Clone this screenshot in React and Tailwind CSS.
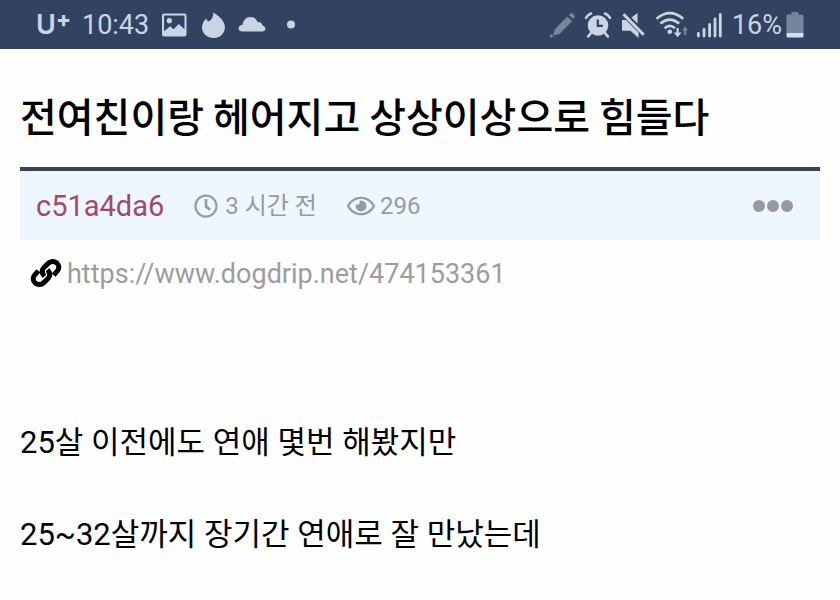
import React from 'react'
import { FaRegClock, FaRegEye } from 'react-icons/fa'

const post = {
  title: '전여친이랑 헤어지고 상상이상으로 힘들다',
  author: 'c51a4da6',
  time: '3 시간 전',
  views: 296,
  url: 'https://www.dogdrip.net/474153361',
  body: ['25살 이전에도 연애 몇번 해봤지만', '25~32살까지 장기간 연애로 잘 만났는데']
}

function StatusIcon({ children, className = '' }) {
  return (
    <svg
      viewBox="0 0 28 28"
      fill="currentColor"
      aria-hidden="true"
      className={`size-7 shrink-0 ${className}`}
    >
      {children}
    </svg>
  )
}

function StatusBar() {
  return (
    <div className="flex h-[49px] items-center justify-between bg-[#314361] px-9 text-[27px] leading-8 text-[#c9d5e4]">
      <div className="flex items-center gap-[11px]">
        <div className="flex items-start">
          <span className="font-[Inter] text-[27px] font-semibold">U</span>
          <span className="font-[Inter] text-[22px] leading-5 font-extrabold">+</span>
        </div>
        <span>10:43</span>
        <StatusIcon>
          <path
            fillRule="evenodd"
            d="M4 2.500h20.500a2 2 0 0 1 2 2v19a2 2 0 0 1-2 2H4a2 2 0 0 1-2-2v-19a2 2 0 0 1 2-2zM4.100 4.400v15.800l6-5 3.400 3 5.300-5.200 5.700 5.200V4.400z"
          />
          <circle cx="9.300" cy="9.700" r="2.600" />
        </StatusIcon>
        <StatusIcon>
          <path d="M14.300 1.400c4.600 2.800 11.600 8 11.600 14.500 0 6.300-4.700 11-11.200 11S3 22.500 3 16.400c0-4 2-6.900 4.200-9 .5 1.300 1.100 2.400 2.400 3.100 3.300-1.700 4.700-4.900 4.700-9.100z" />
        </StatusIcon>
        <StatusIcon>
          <path d="M4.500 20.400C2.200 20.400.6 19.300.6 17.200c0-2 1.600-3.200 3.900-3.300C5.200 9 8.300 5.900 12.300 5.900c3.700 0 6.100 1.900 7.200 5 3.200-.2 4.700 1.500 5.100 3.900 1.700.3 2.700 1.300 2.700 2.900 0 1.700-1.200 2.700-3.200 2.700z" />
        </StatusIcon>
        <StatusIcon>
          <circle cx="14" cy="13.500" r="4" />
        </StatusIcon>
      </div>

      <div className="flex items-center gap-2">
        <StatusIcon className="text-[#77859c]">
          <path d="M19.300 5.500l4.800 4.800L11.500 23l-6.500 1.500 1.800-6.300zM20.800 4l1.800-1.800q.8-.8 1.600 0l2.400 2.400q.8.800 0 1.600l-1.500 1.800z" />
          <circle cx="3.200" cy="25" r="1.600" />
        </StatusIcon>
        <StatusIcon>
          <path
            fillRule="evenodd"
            d="M14 4.200a10.300 10.300 0 1 1 0 20.600 10.300 10.300 0 0 1 0-20.600zM12.700 8.500v7.500h6.100v-2.200h-3.900V8.500z"
          />
          <path
            d="M2 6.900Q3.500 3.900 7 2.500M26 6.900Q24.500 3.900 21 2.500M7 22l-2.800 3.400M21 22l2.800 3.400"
            fill="none"
            stroke="currentColor"
            strokeWidth="2.600"
            strokeLinecap="round"
          />
        </StatusIcon>
        <StatusIcon>
          <path d="M2 9h4l12.500 12.500V27l-8-7.300H2zM17.500 2v10.500l-6-6z" />
          <path d="M3.500 3.200L23.700 23.800" stroke="currentColor" strokeWidth="3" />
        </StatusIcon>
        <svg viewBox="0 0 32 28" fill="none" aria-hidden="true" className="h-7 w-8 shrink-0">
          <g stroke="currentColor" strokeWidth="2.600">
            <path d="M.4 7.800Q13.800-3.400 27.200 7.800" />
            <path d="M4.400 12.600Q13.800 4.600 23.200 12.600" />
            <path d="M8.600 17.200Q13.800 12.600 19 17.200" />
          </g>
          <circle cx="13.800" cy="20.700" r="2.300" fill="currentColor" />
          <path d="M20.500 17h2.200v4.600h2.900l-4 4.600-4-4.600h2.900z" fill="currentColor" />
          <path d="M28 24h2.200v-4.400h2l-3.100-4.400-3.100 4.400h2z" fill="#77859c" />
        </svg>
        <StatusIcon>
          <path
            d="M2.400 22.300V25M8 18.500V25M13.600 13.500V25M19 8V25M24.300 3.500V25"
            fill="none"
            stroke="currentColor"
            strokeWidth="2.800"
            strokeLinecap="round"
          />
        </StatusIcon>
        <div className="flex items-center gap-1">
          <span>16%</span>
          <svg viewBox="0 0 18 26" aria-hidden="true" className="h-[26px] w-[18px]">
            <path
              d="M5.500 0h7v2.500H16A1.500 1.500 0 0 1 17.500 4v17H.5V4A1.500 1.500 0 0 1 2 2.500h3.500z"
              fill="#77859c"
            />
            <path d="M.5 21h17v3a1.500 1.500 0 0 1-1.500 1.500H2A1.500 1.500 0 0 1 .5 24z" fill="#d5dfeb" />
          </svg>
        </div>
      </div>
    </div>
  )
}

function App() {
  return (
    <div className="min-h-screen bg-[#fefefe] font-[Roboto,'Noto_Sans_CJK_KR',sans-serif] text-black">
      <StatusBar />
      <main className="px-5 pt-[34px]">
        <h1 className="font-['Noto_Sans_CJK_KR',sans-serif] text-[40px] leading-[64px] font-medium">
          {post.title}
        </h1>

        <div className="mt-5 flex h-[73px] items-center justify-between border-t-4 border-[#36435b] bg-[#eef6fe] px-4 text-[#999a9d]">
          <div className="flex items-center gap-[30px] text-[24px] leading-8">
            <a href="#author" className="text-[29px] text-[#a2496b]">
              {post.author}
            </a>
            <span className="flex items-center gap-[7px]">
              <FaRegClock className="size-6" />
              {post.time}
            </span>
            <span className="flex items-center gap-[5px]">
              <FaRegEye className="size-7" />
              {post.views}
            </span>
          </div>
          <button type="button" aria-label="메뉴" className="mr-2.5">
            <svg viewBox="0 0 42 14" fill="currentColor" className="h-3.5 w-[42px]">
              <circle cx="7" cy="7" r="6" />
              <circle cx="21" cy="7" r="6" />
              <circle cx="35" cy="7" r="6" />
            </svg>
          </button>
        </div>

        <div className="mt-4 flex items-center gap-[5px] pl-2.5">
          <svg viewBox="0 0 32 32" aria-hidden="true" className="size-8 shrink-0">
            <g fill="none" stroke="currentColor" strokeWidth="5">
              <path d="M14.600 18.200C11.400 15 11.600 12 14 9.400l4.200-4c2.600-2.400 6-2.600 8.600-.4 2.600 2.400 2.600 5.600.4 8.200l-3.600 4" />
              <path d="M17.400 11.800c3.200 3.200 3 6.200.6 8.800l-4.200 4c-2.600 2.400-6 2.600-8.600.4-2.600-2.400-2.600-5.600-.4-8.200l3.600-4" />
            </g>
          </svg>
          <a href={post.url} className="text-[27px] leading-9 text-[#9d9d9d]">
            {post.url}
          </a>
        </div>

        <article className="mt-32 flex flex-col gap-[46px] text-[31px] leading-[46px]">
          {post.body.map((line) => (
            <p key={line}>{line}</p>
          ))}
        </article>
      </main>
    </div>
  )
}

export default App
